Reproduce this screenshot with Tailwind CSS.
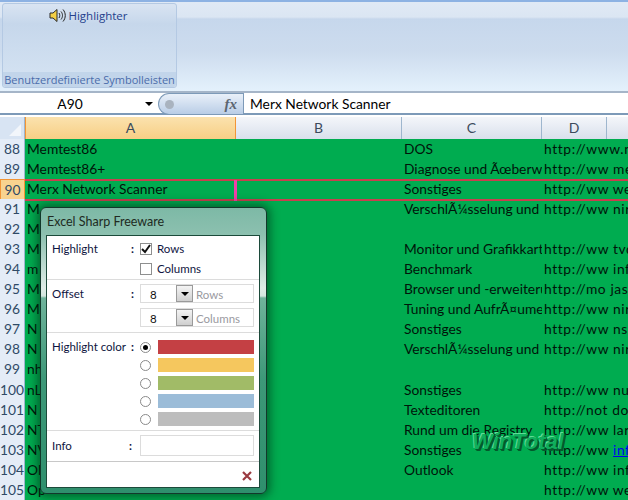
<!DOCTYPE html>
<html lang="de">
<head>
    <meta charset="UTF-8">
    <title>Excel Sharp Freeware</title>
    <script src="https://cdn.jsdelivr.net/npm/@tailwindcss/browser@4"></script>
</head>
<body class="w-[628px] h-[500px] overflow-hidden relative bg-[#00ac50] font-['Lato',sans-serif] text-black">
    <!-- Ribbon -->
    <div class="h-[91px] border-t-2 border-[#8db2e3] bg-[linear-gradient(180deg,#e0e9f5_0,#dbe6f3_15px,#c6d7ec_17px,#cddcee_50px,#e4f1fc_100%)] pl-[2px] pt-[1px]">
        <div class="w-[175px] h-[85px] rounded-[3px] border border-[#b4c9e3] bg-[linear-gradient(180deg,#d9e4f2_0,#c6d7eb_20px,#d6e4f3_100%)] flex flex-col">
            <div class="flex-1 flex justify-center items-start pt-[3px] pr-[2px]">
                <div class="flex items-center gap-[2px] h-[17px]">
                    <svg width="17" height="15" viewBox="0 0 17 15" fill="none">
                        <path d="M1 5h3l4-3.5v12L4 10H1z" fill="#f3cf45" stroke="#2a2a2a" stroke-width="1"/>
                        <path d="M10 5c1 1.500 1 3.500 0 5M12 3.500c2 2.500 2 5.500 0 8M14 1.500c3 3.500 3 8.500 0 12" stroke="#222" stroke-width="1"/>
                    </svg>
                    <span class="font-['Open_Sans',sans-serif] text-[11.500px] text-[#24418c] leading-none">Highlighter</span>
                </div>
            </div>
            <div class="h-[15px] bg-[#c2d5ea] rounded-b-[3px] text-center font-['Open_Sans',sans-serif] text-[11px] leading-[15px] text-[#4a6cab] whitespace-nowrap overflow-hidden">Benutzerdefinierte Symbolleisten</div>
        </div>
    </div>

    <!-- Formula bar -->
    <div class="h-[27px] bg-white border-t-2 border-[#a5b5c8]">
        <div class="h-[22px] border-b-2 border-[#7d9ab8] flex text-[13.800px] leading-[22px]">
            <div class="w-[158px] relative text-center pr-[18px]">A90
                <span class="absolute right-[5px] top-[9px] w-0 h-0 border-x-[4px] border-x-transparent border-t-[4px] border-t-black"></span>
            </div>
            <div class="w-[85px] h-[22px] rounded-l-[11px] border border-[#7d9ab8] border-r-0 bg-[linear-gradient(180deg,#e9f0f9,#b9cde6)] flex items-center justify-between pl-[6px] pr-[6px]">
                <span class="w-[9px] h-[9px] rounded-full bg-[#a9b3bf]"></span>
                <span class="font-['Liberation_Serif',serif] italic font-bold text-[15px] text-[#5c6570]">fx</span>
            </div>
            <div class="flex-1 border-l border-[#7d9ab8] pl-[6px]">Merx Network Scanner</div>
        </div>
    </div>

    <!-- Column headers -->
    <div class="grid grid-cols-[25px_211px_166px_140px_65px_1fr] h-[22px] -mt-[1px] text-[14px] leading-[22px] text-[#3c4a5c] text-center border-b-2 border-[#00904a]">
        <div class="bg-[#d8e4f3] border-r border-[#9eb6ce] flex items-end justify-end p-[3px]">
            <span class="w-0 h-0 border-l-[12px] border-l-transparent border-b-[12px] border-b-[#f2f6fb]"></span>
        </div>
        <div class="bg-[linear-gradient(180deg,#fbe2ae,#f7cf85)] border-x border-[#f29536]">A</div>
        <div class="bg-[linear-gradient(180deg,#f4f6fa,#d9e0ec)] border-r border-[#9eb6ce]">B</div>
        <div class="bg-[linear-gradient(180deg,#f4f6fa,#d9e0ec)] border-r border-[#9eb6ce]">C</div>
        <div class="bg-[linear-gradient(180deg,#f4f6fa,#d9e0ec)] border-r border-[#9eb6ce]">D</div>
        <div class="bg-[linear-gradient(180deg,#f4f6fa,#d9e0ec)]"></div>
    </div>

    <!-- Rows -->
    <div class="text-[13.800px] leading-[20px] text-[#00140a]">
        <div class="grid grid-cols-[25px_377px_140px_1fr] h-[20px]"><div class="bg-[#e4ecf7] border-b border-r border-[#9eb6ce] text-center text-[#2f4a66]">88</div><div class="pl-[2px]">Memtest86</div><div class="pl-[2px] overflow-hidden whitespace-nowrap">DOS</div><div class="pl-[2px] tracking-[0.6px] whitespace-nowrap overflow-hidden">http://www.n</div></div>
        <div class="grid grid-cols-[25px_377px_140px_1fr] h-[20px]"><div class="bg-[#e4ecf7] border-b border-r border-[#9eb6ce] text-center text-[#2f4a66]">89</div><div class="pl-[2px]">Memtest86+</div><div class="pl-[2px] overflow-hidden whitespace-nowrap">Diagnose und Ãœberwachung</div><div class="pl-[2px] tracking-[0.6px] whitespace-nowrap overflow-hidden">http://ww me</div></div>
        <div class="grid grid-cols-[25px_1fr] h-[20px]"><div class="bg-[#f8d38f] border border-[#f29536] text-center text-[#2f4a66]">90</div>
            <div class="relative grid grid-cols-[377px_140px_1fr] border-y-2 border-[#c8404f] leading-[16px]">
                <div class="pl-[2px]">Merx Network Scanner</div><div class="pl-[2px]">Sonstiges</div><div class="pl-[2px] tracking-[0.6px] whitespace-nowrap overflow-hidden">http://ww we</div>
                <span class="absolute left-[209px] -top-[1px] w-[3px] h-[21px] bg-[#f040a8]"></span>
            </div>
        </div>
        <div class="grid grid-cols-[25px_377px_140px_1fr] h-[20px]"><div class="bg-[#e4ecf7] border-b border-r border-[#9eb6ce] text-center text-[#2f4a66]">91</div><div class="pl-[2px]">M</div><div class="pl-[2px] overflow-hidden whitespace-nowrap">VerschlÃ¼sselung und Kennwort</div><div class="pl-[2px] tracking-[0.6px] whitespace-nowrap overflow-hidden">http://ww nir</div></div>
        <div class="grid grid-cols-[25px_377px_140px_1fr] h-[20px]"><div class="bg-[#e4ecf7] border-b border-r border-[#9eb6ce] text-center text-[#2f4a66]">92</div><div class="pl-[2px]">M</div><div></div><div></div></div>
        <div class="grid grid-cols-[25px_377px_140px_1fr] h-[20px]"><div class="bg-[#e4ecf7] border-b border-r border-[#9eb6ce] text-center text-[#2f4a66]">93</div><div class="pl-[2px]">M</div><div class="pl-[2px] overflow-hidden whitespace-nowrap">Monitor und Grafikkarte</div><div class="pl-[2px] tracking-[0.6px] whitespace-nowrap overflow-hidden">http://ww tvd</div></div>
        <div class="grid grid-cols-[25px_377px_140px_1fr] h-[20px]"><div class="bg-[#e4ecf7] border-b border-r border-[#9eb6ce] text-center text-[#2f4a66]">94</div><div class="pl-[2px]">m</div><div class="pl-[2px] overflow-hidden whitespace-nowrap">Benchmark</div><div class="pl-[2px] tracking-[0.6px] whitespace-nowrap overflow-hidden">http://ww inf</div></div>
        <div class="grid grid-cols-[25px_377px_140px_1fr] h-[20px]"><div class="bg-[#e4ecf7] border-b border-r border-[#9eb6ce] text-center text-[#2f4a66]">95</div><div class="pl-[2px]">M</div><div class="pl-[2px] overflow-hidden whitespace-nowrap">Browser und -erweiterungen</div><div class="pl-[2px] tracking-[0.6px] whitespace-nowrap overflow-hidden">http://mo jas</div></div>
        <div class="grid grid-cols-[25px_377px_140px_1fr] h-[20px]"><div class="bg-[#e4ecf7] border-b border-r border-[#9eb6ce] text-center text-[#2f4a66]">96</div><div class="pl-[2px]">M</div><div class="pl-[2px] overflow-hidden whitespace-nowrap">Tuning und AufrÃ¤umen</div><div class="pl-[2px] tracking-[0.6px] whitespace-nowrap overflow-hidden">http://ww nir</div></div>
        <div class="grid grid-cols-[25px_377px_140px_1fr] h-[20px]"><div class="bg-[#e4ecf7] border-b border-r border-[#9eb6ce] text-center text-[#2f4a66]">97</div><div class="pl-[2px]">N</div><div class="pl-[2px] overflow-hidden whitespace-nowrap">Sonstiges</div><div class="pl-[2px] tracking-[0.6px] whitespace-nowrap overflow-hidden">http://ww nsn</div></div>
        <div class="grid grid-cols-[25px_377px_140px_1fr] h-[20px]"><div class="bg-[#e4ecf7] border-b border-r border-[#9eb6ce] text-center text-[#2f4a66]">98</div><div class="pl-[2px]">N</div><div class="pl-[2px] overflow-hidden whitespace-nowrap">VerschlÃ¼sselung und Kennwort</div><div class="pl-[2px] tracking-[0.6px] whitespace-nowrap overflow-hidden">http://ww nir</div></div>
        <div class="grid grid-cols-[25px_377px_140px_1fr] h-[20px]"><div class="bg-[#e4ecf7] border-b border-r border-[#9eb6ce] text-center text-[#2f4a66]">99</div><div class="pl-[2px]">nh</div><div></div><div></div></div>
        <div class="grid grid-cols-[25px_377px_140px_1fr] h-[21px] leading-[21px]"><div class="bg-[#e4ecf7] border-b border-r border-[#9eb6ce] text-center text-[#2f4a66]">100</div><div class="pl-[2px]">nL</div><div class="pl-[2px] overflow-hidden whitespace-nowrap">Sonstiges</div><div class="pl-[2px] tracking-[0.6px] whitespace-nowrap overflow-hidden">http://ww nul</div></div>
        <div class="grid grid-cols-[25px_377px_140px_1fr] h-[20px]"><div class="bg-[#e4ecf7] border-b border-r border-[#9eb6ce] text-center text-[#2f4a66]">101</div><div class="pl-[2px]">N</div><div class="pl-[2px] overflow-hidden whitespace-nowrap">Texteditoren</div><div class="pl-[2px] tracking-[0.6px] whitespace-nowrap overflow-hidden">http://not do</div></div>
        <div class="grid grid-cols-[25px_377px_140px_1fr] h-[20px]"><div class="bg-[#e4ecf7] border-b border-r border-[#9eb6ce] text-center text-[#2f4a66]">102</div><div class="pl-[2px]">NT</div><div class="pl-[2px] overflow-hidden whitespace-nowrap">Rund um die Registry</div><div class="pl-[2px] tracking-[0.6px] whitespace-nowrap overflow-hidden">http://ww lars</div></div>
        <div class="grid grid-cols-[25px_377px_140px_1fr] h-[20px]"><div class="bg-[#e4ecf7] border-b border-r border-[#9eb6ce] text-center text-[#2f4a66]">103</div><div class="pl-[2px]">NV</div><div class="pl-[2px] overflow-hidden whitespace-nowrap">Sonstiges</div><div class="pl-[2px] tracking-[0.6px] whitespace-nowrap overflow-hidden">http://ww <span class="text-[#0000ee] underline">inf</span></div></div>
        <div class="grid grid-cols-[25px_377px_140px_1fr] h-[20px]"><div class="bg-[#e4ecf7] border-b border-r border-[#9eb6ce] text-center text-[#2f4a66]">104</div><div class="pl-[2px]">Ol</div><div class="pl-[2px] overflow-hidden whitespace-nowrap">Outlook</div><div class="pl-[2px] tracking-[0.6px] whitespace-nowrap overflow-hidden">http://ww inf</div></div>
        <div class="grid grid-cols-[25px_377px_140px_1fr] h-[20px]"><div class="bg-[#e4ecf7] border-b border-r border-[#9eb6ce] text-center text-[#2f4a66]">105</div><div class="pl-[2px]">Op</div><div></div><div class="pl-[2px] tracking-[0.6px] whitespace-nowrap overflow-hidden">http://ww we</div></div>
    </div>

    <!-- Watermark -->
    <div class="absolute left-[472px] top-[429px] font-['Liberation_Sans',sans-serif] italic font-bold text-[22px] leading-[26px] text-[#0fae5d] [text-shadow:1px_1px_0_#035a2c,2px_2px_0_#035a2c,-1px_-1px_0_#5fdc97]">WinTotal</div>

    <!-- Dialog window -->
    <div class="absolute left-[40px] top-[207px] w-[227px] h-[287px] rounded-[6px] border border-[#12382b] shadow-[0_0_10px_3px_rgba(0,40,20,0.55)] bg-[linear-gradient(180deg,#7db9a6_0,#8cc0af_26px,#dfece7_80px,#d4e6df_88px,#6fb39b_90px,#3d9878_60%,#2f8f6d_100%)] pl-[5px] pr-[6px] pb-[5px] pt-[27px] font-['Lato',sans-serif] text-[11.500px] text-[#0e1440]">
        <div class="absolute left-[6px] top-[6px] text-[12.500px] leading-[16px] text-[#202a22]">Excel Sharp Freeware</div>
        <div class="h-[253px] bg-white border border-[#1c4a3a] flex flex-col">
            <div class="h-[44px] border-b border-[#dcdcdc] grid grid-cols-[79px_9px_1fr] pl-[5px] pt-[6px] leading-[14px]">
                <div>Highlight</div>
                <div class="font-bold">:</div>
                <div class="flex flex-col gap-[7px] text-[#10163f]">
                    <div class="flex items-center gap-[5px] h-[13px]">
                        <span class="w-[12px] h-[12px] border border-[#8e8f8f] bg-white flex items-center justify-center"><svg width="10" height="10" viewBox="0 0 10 10"><path d="M1 5l3 3 5-7" fill="none" stroke="#111" stroke-width="2"/></svg></span>Rows
                    </div>
                    <div class="flex items-center gap-[5px] h-[13px]">
                        <span class="w-[12px] h-[12px] border border-[#8e8f8f] bg-white"></span>Columns
                    </div>
                </div>
            </div>
            <div class="h-[53px] border-b border-[#dcdcdc] grid grid-cols-[79px_9px_1fr] pl-[5px] pt-[4px] leading-[19px]">
                <div>Offset</div>
                <div class="font-bold">:</div>
                <div class="flex flex-col gap-[5px] w-[114px]">
                    <div class="h-[19px] border border-[#dcdcdc] flex text-[#111]">
                        <span class="w-[35px] pl-[9px]">8</span>
                        <span class="w-[17px] bg-[linear-gradient(180deg,#f4f4f4,#cfcfcf)] border border-[#9a9a9a] flex items-center justify-center"><span class="w-0 h-0 border-x-[4px] border-x-transparent border-t-[4px] border-t-black"></span></span>
                        <span class="pl-[3px] text-[#9a9aa0]">Rows</span>
                    </div>
                    <div class="h-[19px] border border-[#dcdcdc] flex text-[#111]">
                        <span class="w-[35px] pl-[9px]">8</span>
                        <span class="w-[17px] bg-[linear-gradient(180deg,#f4f4f4,#cfcfcf)] border border-[#9a9a9a] flex items-center justify-center"><span class="w-0 h-0 border-x-[4px] border-x-transparent border-t-[4px] border-t-black"></span></span>
                        <span class="pl-[3px] text-[#9a9aa0]">Columns</span>
                    </div>
                </div>
            </div>
            <div class="h-[98px] border-b border-[#dcdcdc] grid grid-cols-[79px_9px_1fr] pl-[5px] pt-[7px] leading-[14px]">
                <div>Highlight color</div>
                <div class="font-bold">:</div>
                <div class="flex flex-col gap-[4px] w-[114px]">
                    <div class="flex items-center gap-[7px] h-[14px]"><span class="w-[11px] h-[11px] rounded-full border border-[#8a8a8a] flex items-center justify-center"><span class="w-[5px] h-[5px] rounded-full bg-black"></span></span><span class="w-[96px] h-[14px] bg-[#c44044]"></span></div>
                    <div class="flex items-center gap-[7px] h-[14px]"><span class="w-[11px] h-[11px] rounded-full border border-[#8a8a8a]"></span><span class="w-[96px] h-[14px] bg-[#f5c75e]"></span></div>
                    <div class="flex items-center gap-[7px] h-[14px]"><span class="w-[11px] h-[11px] rounded-full border border-[#8a8a8a]"></span><span class="w-[96px] h-[14px] bg-[#a1bb67]"></span></div>
                    <div class="flex items-center gap-[7px] h-[14px]"><span class="w-[11px] h-[11px] rounded-full border border-[#8a8a8a]"></span><span class="w-[96px] h-[14px] bg-[#9bbcd8]"></span></div>
                    <div class="flex items-center gap-[7px] h-[14px]"><span class="w-[11px] h-[11px] rounded-full border border-[#8a8a8a]"></span><span class="w-[96px] h-[14px] bg-[#bdbdbd]"></span></div>
                </div>
            </div>
            <div class="h-[31px] border-b border-[#c8c8c8] grid grid-cols-[77px_11px_1fr] pl-[5px] pt-[4px] leading-[21px]">
                <div>Info</div>
                <div class="font-bold">:</div>
                <div class="w-[114px] h-[21px] border border-[#dcdcdc]"></div>
            </div>
            <div class="flex-1 flex justify-end items-start pr-[7px] pt-[9px]">
                <svg width="10" height="10" viewBox="0 0 10 10"><path d="M1 1l8 8M9 1L1 9" stroke="#9a3a40" stroke-width="2.200"/></svg>
            </div>
        </div>
    </div>
</body>
</html>
